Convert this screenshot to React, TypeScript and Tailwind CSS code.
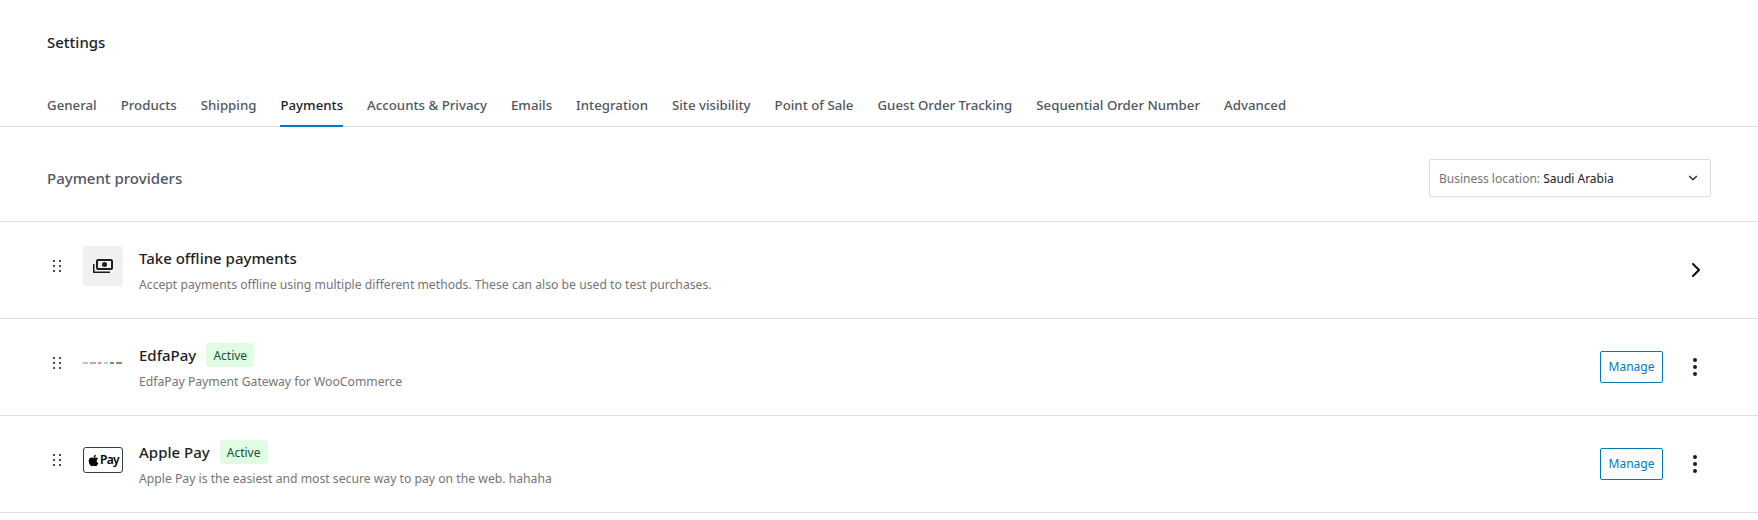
import { ChevronDown, ChevronRight } from 'lucide-react';
import { FaApple } from 'react-icons/fa';

const tabs = [
  'General',
  'Products',
  'Shipping',
  'Payments',
  'Accounts & Privacy',
  'Emails',
  'Integration',
  'Site visibility',
  'Point of Sale',
  'Guest Order Tracking',
  'Sequential Order Number',
  'Advanced',
];

function DragHandle() {
  return (
    <svg width="8" height="12" viewBox="0 0 8 12" className="mt-[14px] shrink-0 fill-[#4a4a4a]">
      <rect x="0" y="0" width="2" height="2" />
      <rect x="6" y="0" width="2" height="2" />
      <rect x="0" y="5" width="2" height="2" />
      <rect x="6" y="5" width="2" height="2" />
      <rect x="0" y="10" width="2" height="2" />
      <rect x="6" y="10" width="2" height="2" />
    </svg>
  );
}

function OfflineIcon() {
  return (
    <div className="flex h-10 w-10 items-center justify-center rounded-[4px] bg-[#f0f0f0]">
      <svg width="20" height="14" viewBox="0 0 20 14" fill="none" stroke="#1e1e1e">
        <rect x="4" y="1" width="15" height="9" rx="1" strokeWidth="2" />
        <circle cx="11.5" cy="5.5" r="2.5" fill="#1e1e1e" stroke="none" />
        <path d="M0.75 5v8.25H17" strokeWidth="1.5" />
      </svg>
    </div>
  );
}

function EdfaLogo() {
  return (
    <div className="flex h-10 w-10 items-center justify-center">
      <svg width="40" height="2" viewBox="0 0 40 2">
        <rect x="0" width="5" height="2" fill="#b3c9b8" />
        <rect x="7" width="6" height="2" fill="#a5a5ea" />
        <rect x="15" width="3" height="2" fill="#f09070" />
        <rect x="21" width="4" height="2" fill="#b0d4f0" />
        <rect x="27" width="4" height="2" fill="#8a8a8a" />
        <rect x="33" width="6" height="2" fill="#bd7a62" />
      </svg>
    </div>
  );
}

function ApplePayLogo() {
  return (
    <div className="flex h-10 w-10 items-center justify-center">
      <div className="flex h-[26px] w-10 items-center justify-center rounded-[3px] border border-[#3c3c3c] bg-white text-black">
        <FaApple size={13} />
        <span className="text-[12px] leading-none font-semibold tracking-tighter">Pay</span>
      </div>
    </div>
  );
}

function ActiveBadge() {
  return (
    <span className="flex h-6 w-12 items-center justify-center rounded-[4px] bg-[#e0fde4] pt-[2px] text-[12px] text-[#14532d]">
      Active
    </span>
  );
}

function ManageActions() {
  return (
    <div className="flex items-center">
      <button className="h-8 w-[63px] rounded-[2px] border border-[#007cba] text-[12px] text-[#007cba]">
        Manage
      </button>
      <svg width="4" height="18" viewBox="0 0 4 18" className="mr-[14px] ml-[30px] fill-[#1e1e1e]">
        <circle cx="2" cy="2" r="2" />
        <circle cx="2" cy="9" r="2" />
        <circle cx="2" cy="16" r="2" />
      </svg>
    </div>
  );
}

function ProviderRow({
  logo,
  name,
  active,
  description,
  actions,
}: {
  logo: React.ReactNode;
  name: string;
  active?: boolean;
  description: string;
  actions: React.ReactNode;
}) {
  return (
    <div className="flex h-[97px] items-center justify-between border-b border-[#e0e0e0] pr-[47px] pl-[53px]">
      <div className="flex items-start self-start pt-6">
        <DragHandle />
        <div className="ml-[22px]">{logo}</div>
        <div className="ml-4">
          <div className="flex h-6 items-center gap-[10px]">
            <p className="text-[15px] leading-6 font-medium text-[#1e1e1e]">{name}</p>
            {active && <ActiveBadge />}
          </div>
          <p className="mt-[5px] text-[12.2px] leading-5 text-[#757575]">{description}</p>
        </div>
      </div>
      {actions}
    </div>
  );
}

export default function App() {
  return (
    <div className="min-h-[520px] bg-white font-['Noto_Sans',sans-serif]">
      <div className="flex h-[86px] items-center pb-[2px] pl-[47px]">
        <h1 className="text-[15px] font-medium text-[#1e1e1e]">Settings</h1>
      </div>
      <nav className="flex h-[41px] gap-6 border-b border-[#e0e0e0] pl-[47px]">
        {tabs.map((tab) => (
          <a
            key={tab}
            className={
              tab === 'Payments'
                ? 'mb-[-1px] flex h-[41px] items-center border-b-2 border-[#007cba] text-[13.25px] font-medium text-[#1e1e1e]'
                : 'flex h-10 items-center text-[13.25px] font-medium text-[#50575e]'
            }
          >
            {tab}
          </a>
        ))}
      </nav>
      <div className="flex items-center justify-between border-b border-[#e0e0e0] px-[47px] pt-8 pb-6">
        <h2 className="text-[15px] font-medium text-[#50575e]">Payment providers</h2>
        <div className="flex h-[38px] w-[282px] items-center justify-between rounded-[2px] border border-[#dcdcde] pr-[10px] pl-[9px] text-[12px]">
          <p className="pt-[2px] text-[#757575]">
            Business location: <span className="text-[#1e1e1e]">Saudi Arabia</span>
          </p>
          <ChevronDown size={14} strokeWidth={2} className="text-[#1e1e1e]" />
        </div>
      </div>
      <ProviderRow
        logo={<OfflineIcon />}
        name="Take offline payments"
        description="Accept payments offline using multiple different methods. These can also be used to test purchases."
        actions={<ChevronRight size={24} strokeWidth={2} className="mr-[3px] text-black" />}
      />
      <ProviderRow
        logo={<EdfaLogo />}
        name="EdfaPay"
        active
        description="EdfaPay Payment Gateway for WooCommerce"
        actions={<ManageActions />}
      />
      <ProviderRow
        logo={<ApplePayLogo />}
        name="Apple Pay"
        active
        description="Apple Pay is the easiest and most secure way to pay on the web. hahaha"
        actions={<ManageActions />}
      />
    </div>
  );
}
